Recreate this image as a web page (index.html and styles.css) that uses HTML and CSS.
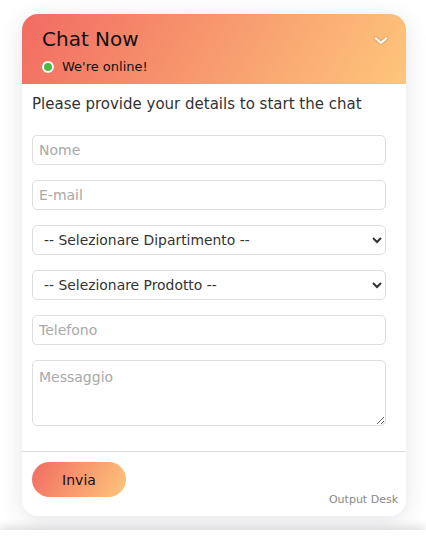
FILE: index.html
```html
<!DOCTYPE html>
<html>
<head>
<meta charset="utf-8">
<link rel="stylesheet" href="styles.css">
</head>
<body>
<div class="page">
  <div class="card">
    <div class="header">
      <div class="head-text">
        <div class="title">Chat Now</div>
        <div class="status"><span class="dot"></span>We're online!</div>
      </div>
      <svg class="chev" width="14" height="10" viewBox="0 0 14 10"><path d="M2 2.5 L7 7 L12 2.5" fill="none" stroke="#fff" stroke-width="2" stroke-linecap="round" stroke-linejoin="round"/></svg>
    </div>
    <div class="body">
      <p class="intro">Please provide your details to start the chat</p>
      <form class="form">
        <input class="field" type="text" placeholder="Nome">
        <input class="field" type="text" placeholder="E-mail">
        <select class="field sel"><option>-- Selezionare Dipartimento --</option></select>
        <select class="field sel"><option>-- Selezionare Prodotto --</option></select>
        <input class="field" type="text" placeholder="Telefono">
        <textarea class="field area" placeholder="Messaggio"></textarea>
      </form>
    </div>
    <div class="footer">
      <button class="send" type="button">Invia</button>
      <span class="brand">Output Desk</span>
    </div>
  </div>
  <div class="below"></div>
</div>
</body>
</html>
```
FILE: styles.css
```css
* { box-sizing: border-box; }
html, body { margin: 0; padding: 0; background: #fff; }
body { font-family: "DejaVu Sans", Verdana, sans-serif; overflow: hidden; height: 537px; }
.page { padding-top: 14px; display: flex; flex-direction: column; align-items: flex-start; }
.card {
  margin-left: 22px;
  width: 384px;
  height: 502px;
  background: #fff;
  border-radius: 16px;
  box-shadow: 0 4px 22px rgba(40, 50, 80, 0.13);
  display: flex;
  flex-direction: column;
  overflow: hidden;
}
.header {
  height: 70px;
  background: linear-gradient(120deg, #f26b62 0%, #f79a6e 50%, #fec67b 100%);
  padding: 13px 18px 0 20px;
  display: flex;
  justify-content: space-between;
  align-items: flex-start;
}
.title { font-size: 20px; color: #111; line-height: 25px; }
.status { display: flex; align-items: center; font-size: 13px; color: #111; margin-top: 7px; }
.dot {
  width: 12px; height: 12px; border-radius: 50%;
  background: #4cb944; border: 2px solid #fff;
  margin-right: 8px;
}
.chev { margin-top: 9px; filter: drop-shadow(0 0 1px rgba(0,0,0,0.3)); }
.body { padding: 11px 20px 0 10px; flex: 1; border-bottom: 1px solid #dcdce0; }
.intro { margin: 0 0 21px 0; font-size: 15px; color: #333; line-height: 19px; }
.form { display: flex; flex-direction: column; gap: 15px; }
.field {
  width: 354px;
  height: 30px;
  border: 1px solid #dedede;
  border-radius: 5px;
  background: #fff;
  font-family: "DejaVu Sans", Verdana, sans-serif;
  font-size: 14px;
  color: #333;
  padding: 0 6px;
  margin: 0;
  outline: none;
}
.field::placeholder { color: #a9a9a9; }
.sel { padding-left: 7px; color: #333; font-size: 13.9px; }
.area { height: 66px; padding-top: 8px; resize: vertical; }
.footer {
  height: 64px;
  padding: 10px 8px 0 10px;
  display: flex;
  justify-content: space-between;
  align-items: flex-start;
}
.send {
  width: 94px; height: 35px;
  border: none; border-radius: 18px;
  background: linear-gradient(120deg, #f26b62 0%, #f79a6e 50%, #fec67b 100%);
  font-family: "DejaVu Sans", Verdana, sans-serif;
  font-size: 14px; color: #111;
  padding: 0;
}
.brand { font-size: 11px; color: #888; margin-top: 31px; }
.below {
  margin-top: 14px;
  width: 426px;
  height: 20px;
  background: #fff;
  box-shadow: 0 -4px 8px rgba(0,0,0,0.12);
}
```
